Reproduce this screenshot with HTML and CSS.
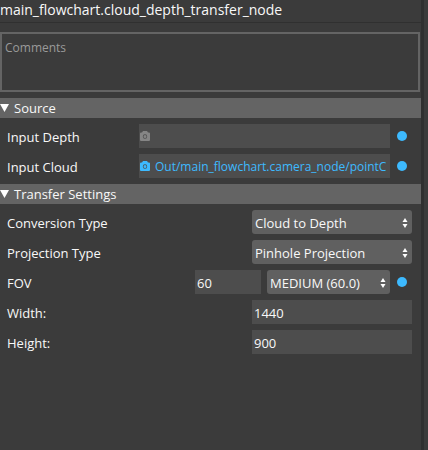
FILE: index.html
```html
<!DOCTYPE html>
<html lang="en">

<head>
    <meta charset="UTF-8" />
    <meta name="viewport" content="width=device-width, initial-scale=1" />
    <title>main_flowchart.cloud_depth_transfer_node</title>
    <link rel="stylesheet" href="styles.css">
</head>

<body>
    <svg class="symbols" aria-hidden="true">
        <symbol id="camera" viewBox="0 0 10 10">
            <path fill-rule="evenodd" d="M3 0h4l1 1.500h1q1 0 1 1V9q0 1-1 1H1Q0 10 0 9V2.500q0-1 1-1h1zM5 3.300a2.200 2.200 0 1 0 0 4.400a2.200 2.200 0 1 0 0-4.400zM5 4a1.500 1.500 0 1 1 0 3a1.500 1.500 0 1 1 0-3z" />
        </symbol>
        <symbol id="arrows" viewBox="0 0 6 10">
            <path d="M3 0l2.500 4h-5zM3 10l2.500-4h-5z" />
        </symbol>
        <symbol id="triangle" viewBox="0 0 10 8">
            <path d="M0 0h9L4.500 8z" />
        </symbol>
    </svg>

    <main class="panel">
        <h1 class="title">main_flowchart.cloud_depth_transfer_node</h1>

        <textarea class="comments" placeholder="Comments" aria-label="Comments"></textarea>

        <details class="section" open>
            <summary><svg class="triangle"><use href="#triangle" /></svg>Source</summary>
            <div class="row linked">
                <label for="inputDepth">Input Depth</label>
                <div class="port">
                    <svg class="camera"><use href="#camera" /></svg>
                    <input type="text" id="inputDepth" />
                </div>
                <span class="dot"></span>
            </div>
            <div class="row linked">
                <label for="inputCloud">Input Cloud</label>
                <div class="port connected">
                    <svg class="camera"><use href="#camera" /></svg>
                    <input type="text" id="inputCloud" value="Out/main_flowchart.camera_node/pointCloud" />
                </div>
                <span class="dot"></span>
            </div>
        </details>

        <details class="section" open>
            <summary><svg class="triangle"><use href="#triangle" /></svg>Transfer Settings</summary>
            <div class="row">
                <label for="conversionType">Conversion Type</label>
                <div class="select wide">
                    <select id="conversionType">
                        <option>Cloud to Depth</option>
                    </select>
                    <svg class="arrows"><use href="#arrows" /></svg>
                </div>
            </div>
            <div class="row">
                <label for="projectionType">Projection Type</label>
                <div class="select wide">
                    <select id="projectionType">
                        <option>Pinhole Projection</option>
                    </select>
                    <svg class="arrows"><use href="#arrows" /></svg>
                </div>
            </div>
            <div class="row linked">
                <label for="fov">FOV</label>
                <input type="text" class="number short" id="fov" value="60" />
                <div class="select preset">
                    <select aria-label="FOV preset">
                        <option>MEDIUM (60.0)</option>
                    </select>
                    <svg class="arrows"><use href="#arrows" /></svg>
                </div>
                <span class="dot"></span>
            </div>
            <div class="row">
                <label for="width">Width:</label>
                <input type="text" class="number wide" id="width" value="1440" />
            </div>
            <div class="row">
                <label for="height">Height:</label>
                <input type="text" class="number wide" id="height" value="900" />
            </div>
        </details>
    </main>
</body>

</html>
```
FILE: styles.css
```css
:root {
    --bg: #3b3b3b;
    --line: #303030;
    --bar: #646464;
    --field: #4d4d4d;
    --select: #606060;
    --text: #f8f8f8;
    --accent: #3dbaff;
    --font: "Open Sans", "Noto Sans", sans-serif;
}

* {
    box-sizing: border-box;
}

body {
    margin: 0;
    background-color: var(--bg);
    color: var(--text);
    font: 13px/20px var(--font);
}

input,
select,
textarea {
    font: inherit;
    color: inherit;
    border: 0;
    border-radius: 0;
    outline: 0;
    margin: 0;
}

.symbols {
    display: none;
}

/* dark splitter on the right edge of the panel */
.panel {
    min-height: 100vh;
    margin-right: 4px;
    border-right: 3px solid var(--line);
}

.title {
    height: 23px;
    margin: 0;
    border-bottom: 1px solid var(--line);
    font-size: 14px;
    font-weight: normal;
    line-height: 20px;
    white-space: nowrap;
}

.comments {
    display: block;
    width: calc(100% - 1px);
    height: 60px;
    margin: 9px 0 6px;
    padding: 4px 3px;
    border: 2px solid var(--bar);
    background: none;
    font-size: 12px;
    resize: none;
}

.comments::placeholder {
    color: #9a9a9a;
}

.section {
    margin-bottom: 6px;
}

.section summary {
    display: flex;
    align-items: center;
    gap: 4px;
    height: 20px;
    margin-bottom: 6px;
    background-color: var(--bar);
    line-height: 24px;
    list-style: none;
}

.triangle {
    width: 10px;
    height: 8px;
    fill: #fff;
}

.row {
    display: flex;
    gap: 6px;
    height: 24px;
    margin-bottom: 6px;
    padding: 0 9px 0 7px;
    line-height: 26px;
}

.row label {
    flex: 1;
    white-space: nowrap;
}

.linked {
    padding-right: 14px;
}

.dot {
    align-self: center;
    width: 10px;
    height: 10px;
    margin-left: 1px;
    border-radius: 50%;
    background-color: var(--accent);
}

.port {
    display: flex;
    align-items: center;
    gap: 5px;
    width: 251px;
    padding: 0 4px 0 1px;
    background-color: var(--field);
}

.port input {
    flex: 1;
    min-width: 0;
    height: 24px;
    padding: 2px 0 0;
    background: none;
    font-size: 12px;
}

.camera {
    flex: none;
    width: 10px;
    height: 10px;
    fill: #858585;
}

.connected {
    color: var(--accent);
}

.connected .camera {
    fill: var(--accent);
}

.number {
    height: 24px;
    padding: 2px 2px 0;
    background-color: var(--field);
}

.wide {
    width: 160px;
}

.short {
    width: 66px;
}

.preset {
    width: 123px;
}

.select {
    position: relative;
}

.select select {
    display: block;
    appearance: none;
    width: 100%;
    height: 24px;
    padding: 1px 30px 0 3px;
    border-radius: 3px;
    background-color: var(--select);
    line-height: 24px;
}

.arrows {
    position: absolute;
    top: 8px;
    right: 4px;
    width: 6px;
    height: 10px;
    fill: #fff;
    pointer-events: none;
}
```
